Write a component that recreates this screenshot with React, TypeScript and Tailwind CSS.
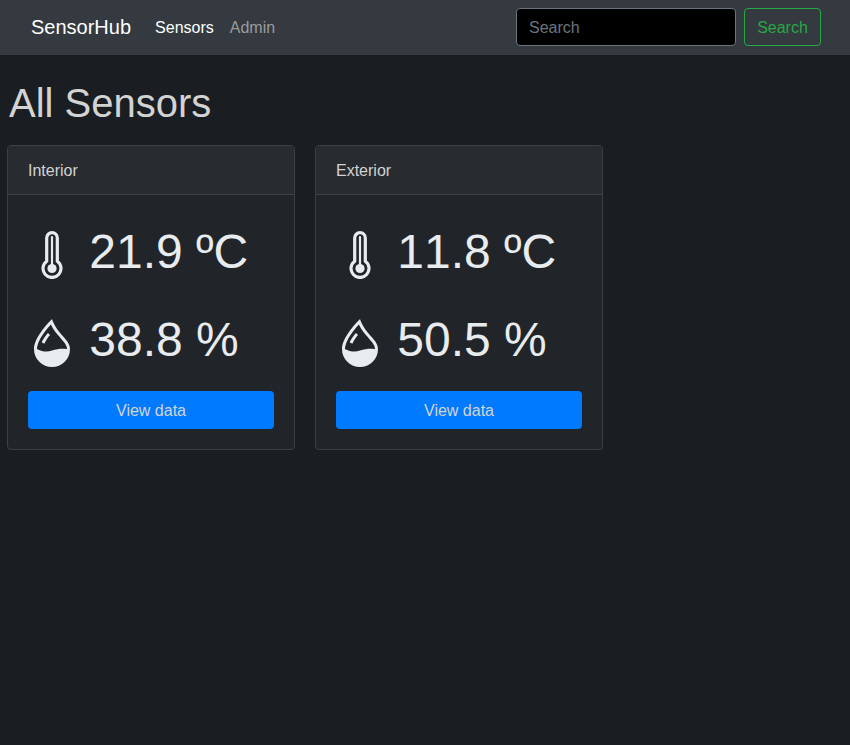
import { BsDropletHalf } from "react-icons/bs";

type Sensor = { name: string; temperature: string; humidity: string };

const sensors: Sensor[] = [
  { name: "Interior", temperature: "21.9 ºC", humidity: "38.8 %" },
  { name: "Exterior", temperature: "11.8 ºC", humidity: "50.5 %" },
];

function Thermometer() {
  return (
    <svg viewBox="0 0 48 48" fill="none" className="mt-4 size-12 shrink-0" aria-hidden="true">
      <path
        d="M18.7 30.2V7a5.3 5.3 0 0 1 10.6 0v23.2a9 9 0 1 1-10.6 0z"
        stroke="currentColor"
        strokeWidth="3.2"
      />
      <path d="M24 6v30" stroke="currentColor" strokeWidth="2.2" strokeLinecap="round" />
      <circle cx="24" cy="37.5" r="4.6" fill="currentColor" />
    </svg>
  );
}

function SensorCard({ name, temperature, humidity }: Sensor) {
  return (
    <section className="h-[305px] w-72 rounded border border-[#3d4043] bg-[#212529]">
      <h2 className="h-[49px] rounded-t-[3px] border-b border-[#3f4245] bg-[#282b2f] px-5 pt-[13px] text-base leading-6">
        {name}
      </h2>
      <div className="px-5 pt-5 text-[48px] leading-[72px] text-[#e9ecef]">
        <div className="flex h-[88px] items-start">
          <Thermometer />
          <span className="ml-[13.34px] pt-px whitespace-nowrap [font-kerning:none]">{temperature}</span>
        </div>
        <div className="flex h-[88px] items-start">
          <BsDropletHalf className="mt-4 size-12 shrink-0" />
          <span className="ml-[13.34px] pt-px whitespace-nowrap [font-kerning:none]">{humidity}</span>
        </div>
        <button className="block h-[38px] w-full rounded bg-[#007bff] pt-0.5 text-base leading-6 text-[#d3d3d3]">
          View data
        </button>
      </div>
    </section>
  );
}

export default function App() {
  return (
    <div className="min-h-screen bg-[#1a1d21] font-['Liberation_Sans',Arial,sans-serif] text-base text-[#d3d3d3]">
      <nav className="flex h-[55px] items-start bg-[#343a40] pt-2 pr-[29px] pl-[31px] leading-[38px]">
        <a className="text-xl leading-[38px] text-white">SensorHub</a>
        <a className="ml-6 pt-px text-white">Sensors</a>
        <a className="ml-4 pt-px text-[#999c9f]">Admin</a>
        <form className="ml-auto flex gap-2">
          <input
            type="search"
            placeholder="Search"
            className="h-[38px] w-[220px] rounded border border-[#6c757d] bg-black px-3 pt-0.5 leading-6 placeholder:text-[#6c757d]"
          />
          <button
            type="button"
            className="h-[38px] w-[77px] rounded border border-[#28a745] pt-0.5 leading-6 text-[#28a745]"
          >
            Search
          </button>
        </form>
      </nav>
      <main className="px-[7px] pt-6">
        <h1 className="ml-0.5 text-[40px] leading-[48px]">All Sensors</h1>
        <div className="mt-[18px] flex gap-5">
          {sensors.map((sensor) => (
            <SensorCard key={sensor.name} {...sensor} />
          ))}
        </div>
      </main>
    </div>
  );
}
